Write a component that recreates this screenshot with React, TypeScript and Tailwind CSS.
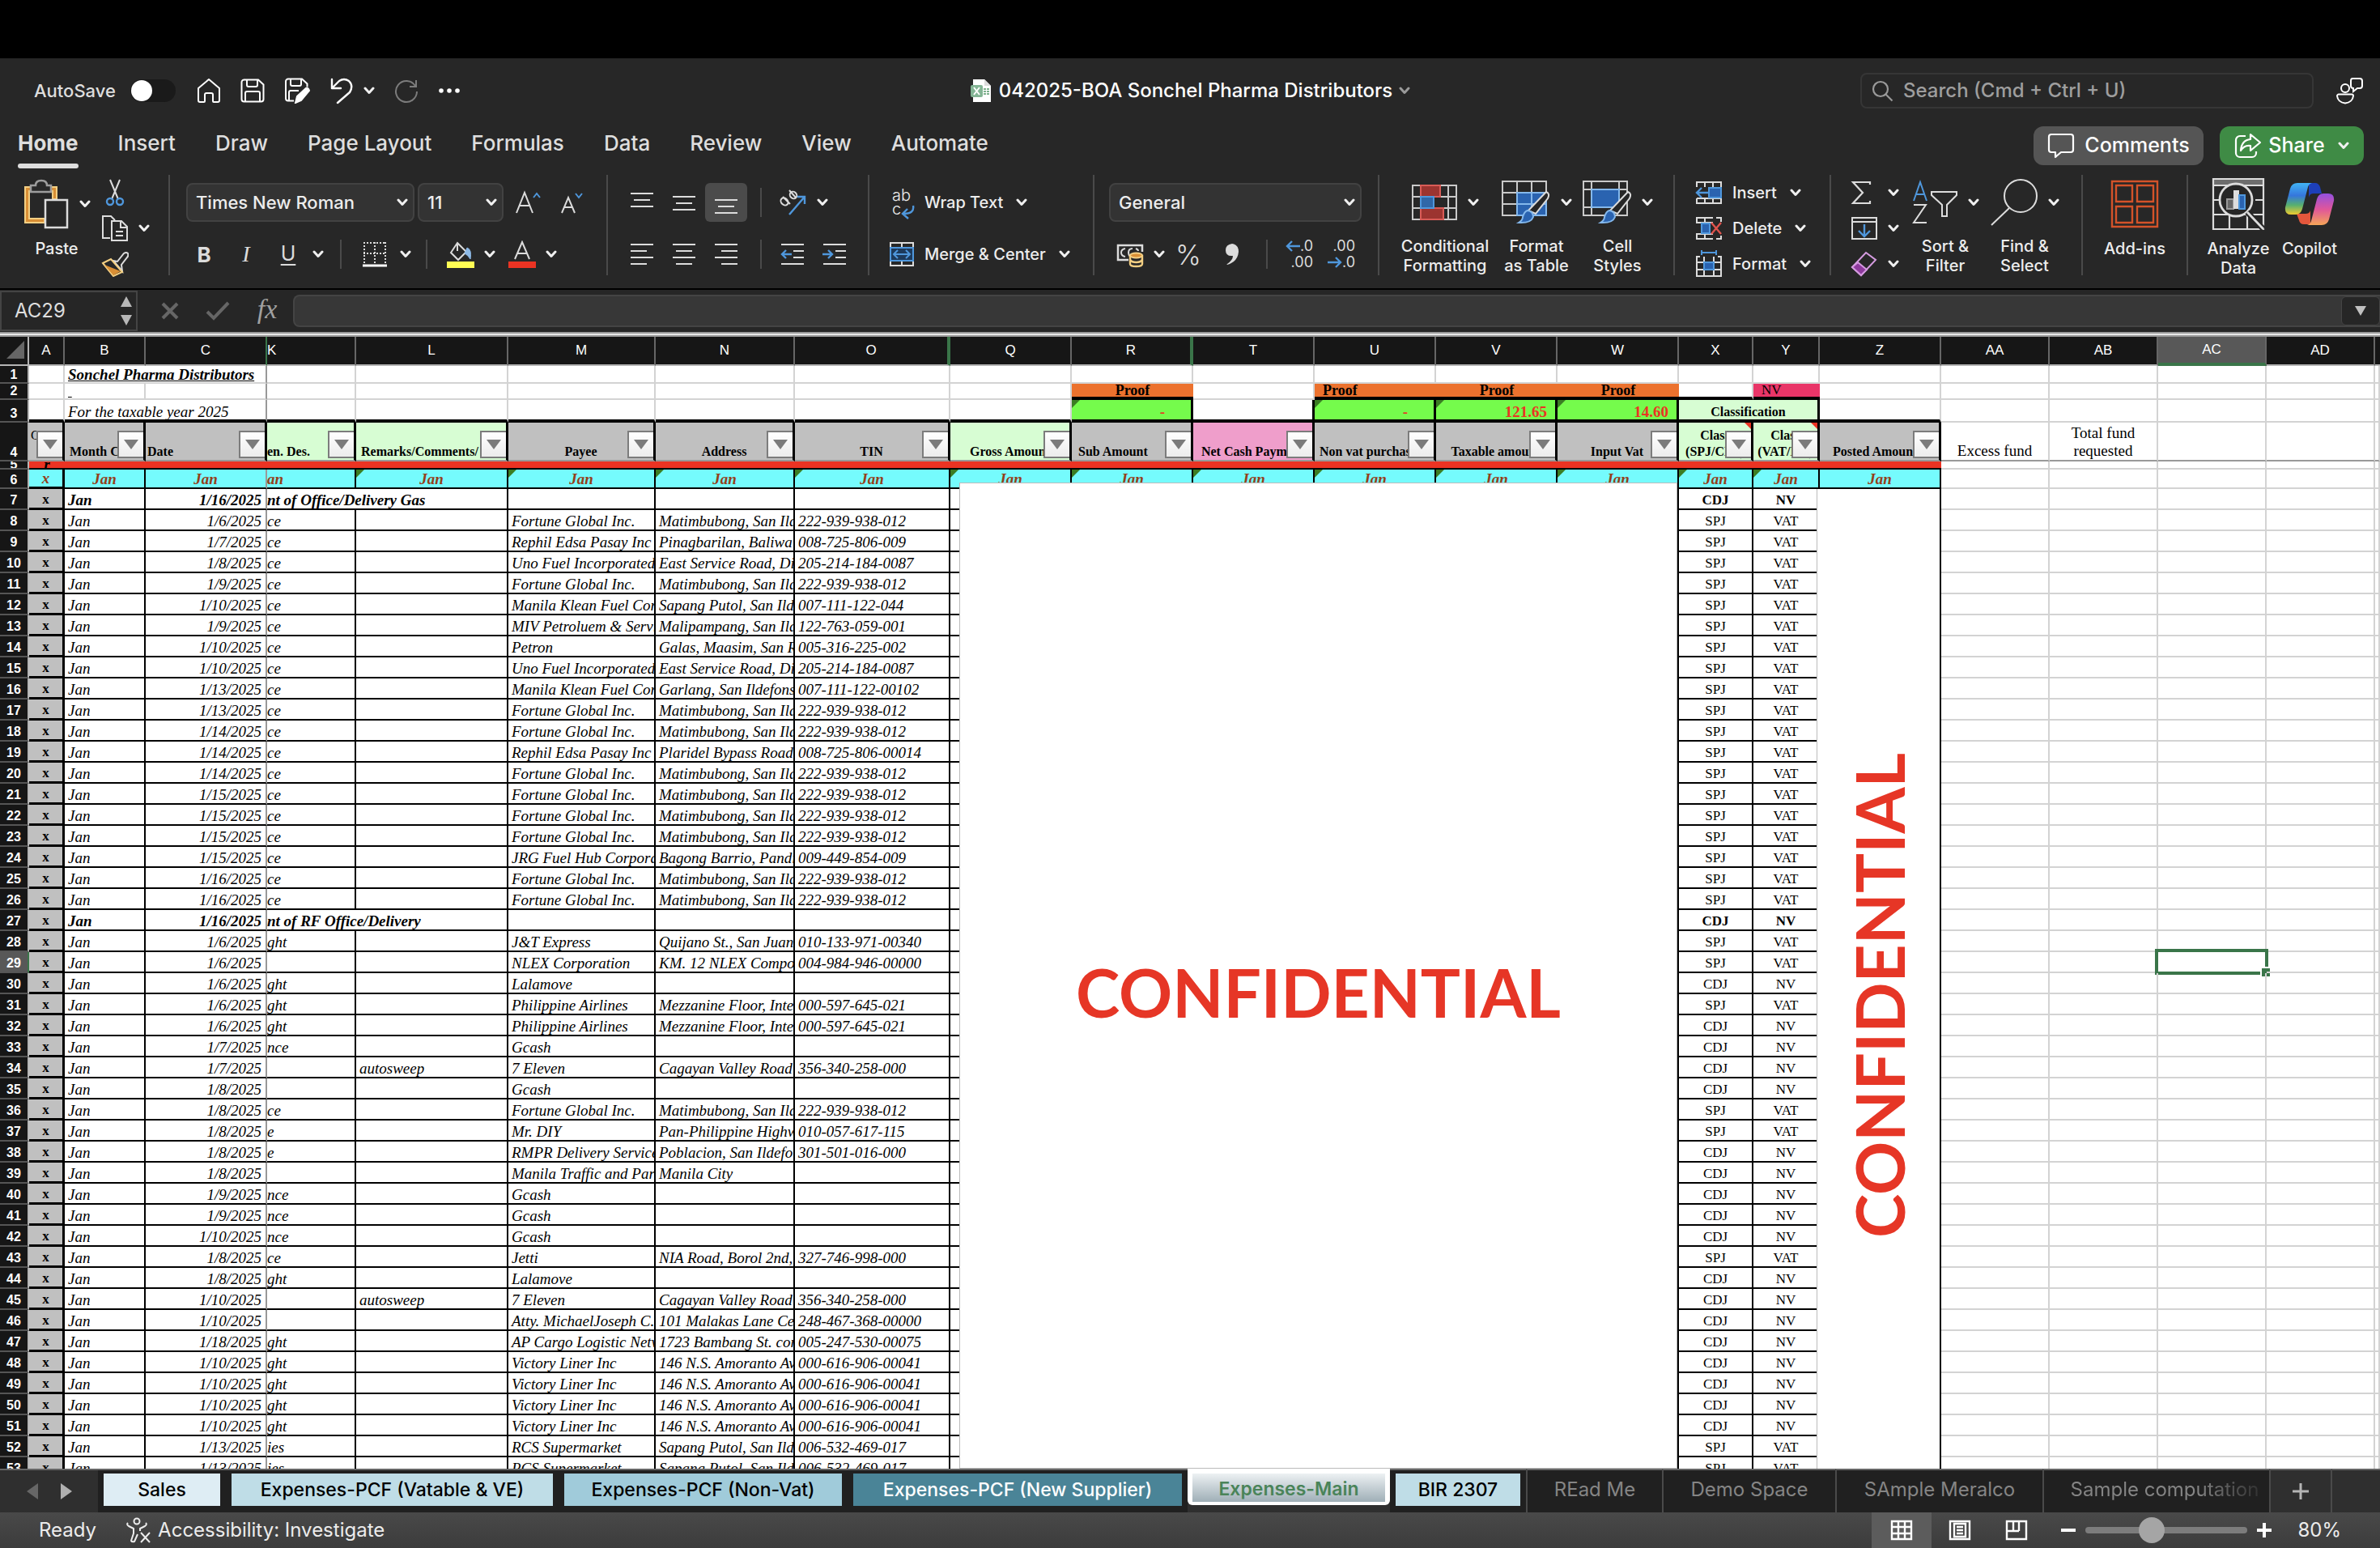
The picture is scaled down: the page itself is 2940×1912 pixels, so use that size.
import React from "react";
import { clsx, type ClassValue } from "clsx";
import { twMerge } from "tailwind-merge";

const cn = (...inputs: ClassValue[]) => twMerge(clsx(inputs));

const LIGHT = "#dcdcdc";
const BLUE = "#4f97dc";
const FILL_BLUE = "#2a63b0";

/* ---------------------------------- icons --------------------------------- */

type SvgProps = {
  w: number;
  h: number;
  stroke?: string;
  sw?: number;
  className?: string;
  children: React.ReactNode;
};

const Svg = ({ w, h, stroke = LIGHT, sw = 2, className, children }: SvgProps) => (
  <svg
    width={w}
    height={h}
    viewBox={`0 0 ${w} ${h}`}
    fill="none"
    stroke={stroke}
    strokeWidth={sw}
    className={cn("shrink-0", className)}
    aria-hidden="true"
  >
    {children}
  </svg>
);

const Chevron = ({ color = "#f0f0f0", className }: { color?: string; className?: string }) => (
  <Svg w={14} h={10} stroke={color} sw={3} className={className}>
    <path d="M2 2l5 5.5L12 2" strokeLinecap="round" strokeLinejoin="round" />
  </Svg>
);

const HomeIcon = () => (
  <Svg w={30} h={32} stroke="#fff">
    <path
      d="M2 13L15 2l13 11v15a2 2 0 0 1-2 2h-5a1 1 0 0 1-1-1v-8a2 2 0 0 0-2-2h-6a2 2 0 0 0-2 2v8a1 1 0 0 1-1 1H4a2 2 0 0 1-2-2z"
      strokeLinejoin="round"
    />
  </Svg>
);

const SaveIcon = () => (
  <Svg w={30} h={30} stroke="#fff">
    <path d="M4 1.5h18l6.500 6v18a3 3 0 0 1-3 3h-21a3 3 0 0 1-3-3v-21a3 3 0 0 1 3-3z" />
    <path d="M8 2v6a2 2 0 0 0 2 2h9a2 2 0 0 0 2-2V2M6 28V18a2 2 0 0 1 2-2h14a2 2 0 0 1 2 2v10" />
  </Svg>
);

const SaveEditIcon = () => (
  <Svg w={32} h={32} stroke="#fff">
    <path d="M12 28.500H5a3 3 0 0 1-3-3v-21a3 3 0 0 1 3-3h17l6.500 6v4" />
    <path d="M8 2v6a2 2 0 0 0 2 2h9a2 2 0 0 0 2-2V2M6 28V18a2 2 0 0 1 2-2h10" />
    <path d="M14 31l2-8 11-10q3-1 4 3L21 28z" fill="#fff" />
  </Svg>
);

const UndoIcon = () => (
  <Svg w={30} h={34} stroke="#fff" sw={2.4}>
    <path d="M3 3v11h11M3 14L12 5q6-4 12 0 6 6 1 14L10 32" strokeLinejoin="round" strokeLinecap="round" />
  </Svg>
);

const RedoIcon = () => (
  <Svg w={30} h={32} stroke="#7c7c7c">
    <path d="M27 3v8h-8M26 10A13 13 0 1 0 28 17" />
  </Svg>
);

const MoreIcon = () => (
  <Svg w={28} h={8} stroke="none">
    <circle cx="4" cy="4" r="2.800" fill="#fff" />
    <circle cx="14" cy="4" r="2.800" fill="#fff" />
    <circle cx="24" cy="4" r="2.800" fill="#fff" />
  </Svg>
);

const FileIcon = () => (
  <Svg w={28} h={30} stroke="none">
    <path d="M4 1h14l8 8v20H4z" fill="#fff" />
    <path d="M18 1l8 8h-8z" fill="#ddd" />
    <path d="M17 12h3v2h-3zM21 12h3v2h-3zM17 15h3v2h-3zM21 15h3v2h-3zM17 18h3v2h-3zM21 18h3v2h-3z" fill="#7db08c" />
    <rect x="1" y="8" width="15" height="15" rx="2" fill="#84b595" />
    <path d="M5 11l7 9M12 11l-7 9" stroke="#fff" strokeWidth="2" />
  </Svg>
);

const SearchIcon = () => (
  <Svg w={27} h={27} stroke="#9a9a9a" sw={2.2}>
    <circle cx="11" cy="11" r="9" />
    <path d="M17.500 17.500l8 8" />
  </Svg>
);

const PeopleIcon = () => (
  <Svg w={34} h={34} stroke="#fff">
    <circle cx="11" cy="14" r="5" />
    <path d="M3 21.500h16a2 2 0 0 1 2 2q-1 8-10 9-9-1-10-9a2 2 0 0 1 2-2z" />
    <path d="M20 2h9a3 3 0 0 1 3 3v6a3 3 0 0 1-3 3h-3l-5 4v-4q-3 0-3-3V5q0-3 2-3z" />
  </Svg>
);

const CommentIcon = () => (
  <Svg w={34} h={32} stroke="#fff" sw={2.2}>
    <path d="M5 2h24a3 3 0 0 1 3 3v16a3 3 0 0 1-3 3H17l-7 6v-6H5a3 3 0 0 1-3-3V5a3 3 0 0 1 3-3z" strokeLinejoin="round" />
  </Svg>
);

const ShareIcon = () => (
  <Svg w={34} h={32} stroke="#fff" sw={2.2}>
    <path d="M14 4H7a5 5 0 0 0-5 5v16a5 5 0 0 0 5 5h15a5 5 0 0 0 5-5v-2" />
    <path d="M20 2l12 10-12 10v-6q-8-1-12 6 1-13 12-14z" strokeLinejoin="round" />
  </Svg>
);

const PasteIcon = () => (
  <Svg w={58} h={62}>
    <path d="M10 10H3v44h24v-5H8V15h2zM35 10h7v15h-5V15h-2z" fill="#d98f35" stroke="#f3cf83" strokeWidth="2" />
    <path d="M10 16v-8h6q0-6 7-6t7 6h5v8z" fill="#292929" stroke="#9d9d9d" strokeWidth="2.500" />
    <rect x="28" y="26" width="27" height="34" fill="#262626" strokeWidth="2.500" />
  </Svg>
);

const ScissorsIcon = () => (
  <Svg w={24} h={34}>
    <path d="M6 1l10 24M18 1L8 25" />
    <circle cx="6" cy="28" r="4" stroke={BLUE} strokeWidth="2.400" />
    <circle cx="18" cy="28" r="4" stroke={BLUE} strokeWidth="2.400" />
  </Svg>
);

const CopyIcon = () => (
  <Svg w={34} h={34}>
    <path d="M11 29H2V2h10l5 5M13 8h12l7 7v17H13z" />
    <path d="M24 8v8h8M18 21h9M18 26h9" />
  </Svg>
);

const BrushIcon = () => (
  <Svg w={34} h={32}>
    <path d="M20 13l8-10q3-2 5 0 1 3-1 5l-7 9 1 8-11-13z" />
    <path d="M2 15l10-5 14 16-11 5z" stroke="#f3cf83" />
    <path d="M4 17l20 8-9 5z" fill="#d98f35" stroke="none" />
  </Svg>
);

const AlignIcon = ({ lines }: { lines: [number, number, number][] }) => (
  <Svg w={28} h={28}>
    {lines.map(([x, y, w]) => (
      <path key={y} d={`M${x} ${y}h${w}`} />
    ))}
  </Svg>
);

const IndentIcon = ({ out }: { out?: boolean }) => (
  <Svg w={30} h={28}>
    <path d="M1 2h28M16 10h13M16 18h13M1 26h28" />
    <path d={out ? "M14 14H2M7 9l-5 5 5 5" : "M0 14h12M7 9l5 5-5 5"} stroke={BLUE} strokeWidth="2.400" />
  </Svg>
);

const OrientationIcon = () => (
  <Svg w={34} h={32}>
    <ellipse cx="6" cy="15" rx="4" ry="5" transform="rotate(-45 6 15)" />
    <path d="M4 9l9 9M12 1l8 9" />
    <ellipse cx="17" cy="7" rx="4" ry="4.500" transform="rotate(-45 17 7)" />
    <path d="M12 31L31 9M22 9h9v9" stroke={BLUE} strokeWidth="2.400" />
  </Svg>
);

const BordersIcon = () => (
  <Svg w={30} h={32}>
    <path d="M1 2h28M1 15h28M2 1v26M15 1v26M28 1v26" strokeDasharray="2 2" />
    <path d="M0 30h30" stroke="#fff" strokeWidth="3" />
  </Svg>
);

const FillColorIcon = () => (
  <Svg w={34} h={34}>
    <path d="M13 3l11 11-10 10L5 15z M13 3v10" />
    <path d="M25 9q6 2 4 14-3-5-7-7z" fill="#8db9e6" stroke="#8db9e6" strokeWidth="1" />
    <path d="M0 26h34v8H0z" fill="#fffd54" stroke="none" />
  </Svg>
);

const FontColorIcon = () => (
  <Svg w={34} h={34}>
    <path d="M8 23L17 2l9 21M11 16h12" />
    <path d="M0 26h34v8H0z" fill="#eb3323" stroke="none" />
  </Svg>
);

const MergeIcon = () => (
  <Svg w={32} h={32}>
    <path d="M2 8V2h28v6M16 2v6M2 24v6h28v-6M16 30v-6" />
    <rect x="2" y="8" width="28" height="16" stroke={BLUE} fill="#1d3a5c" />
    <path d="M6 16h20M11 11l-5 5 5 5M21 11l5 5-5 5" stroke={BLUE} />
  </Svg>
);

const CurrencyIcon = () => (
  <Svg w={34} h={34}>
    <path d="M15 24H2V6h30v8" strokeWidth="2.500" />
    <path d="M11 10q-5 1-5 5t5 5M20 10q-5 0-5 5 0 3 2 5M24 10q3 1 3 3" />
    <path d="M17 19v10q0 3 7.500 3t7.500-3V19z" fill="#262626" stroke="#f3cf83" strokeWidth="2.400" />
    <path d="M17 24q2 3 7.500 3t7.500-3" stroke="#f3cf83" strokeWidth="2.400" />
    <ellipse cx="24.500" cy="18.500" rx="7.500" ry="3" fill="#d98f35" stroke="#f3cf83" strokeWidth="2" />
  </Svg>
);

const CommaIcon = () => (
  <Svg w={18} h={28} stroke="none">
    <path d="M9 1q8 1 8 10-1 12-14 16-1 0 0-1 7-5 7-10-9 1-9-7 0-7 8-8z" fill={LIGHT} />
  </Svg>
);

const ConditionalIcon = () => (
  <Svg w={58} h={46} stroke="#c9c9c9">
    <path d="M2 2h54v42H2zM2 16h54M2 30h54M12 2v42M46 2v42" />
    <path d="M12 2h24v14H12zM12 30h28v14H12z" fill="#9c3430" stroke="#d95c57" />
    <path d="M12 16h16v14H12z" fill="#2f67a8" stroke={BLUE} />
  </Svg>
);

const PaintBrush = () => (
  <>
    <path d="M58 15q5 2 2 8L45 42l-9-4z" fill="#262626" stroke={LIGHT} />
    <path d="M35 38q7 1 7 8-3 8-18 7 5-3 5-7 2-7 6-8z" fill={FILL_BLUE} stroke="#84b8ec" />
  </>
);

const FormatTableIcon = () => (
  <Svg w={62} h={56}>
    <path d="M2 2h54v42H2zM2 16h54M2 30h54M20 2v42M38 2v42" stroke="#c9c9c9" />
    <path d="M20 16h36v28H20z" fill={FILL_BLUE} stroke="#84b8ec" />
    <path d="M20 30h36M38 16v28" stroke="#84b8ec" />
    <g transform="translate(-2 0)">
      <PaintBrush />
    </g>
  </Svg>
);

const CellStylesIcon = () => (
  <Svg w={62} h={56}>
    <path d="M2 2h54v42H2zM2 12h54M2 34h10M12 2v42M46 2v10" stroke="#c9c9c9" />
    <path d="M12 12h34v22H12z" fill={FILL_BLUE} stroke="#84b8ec" />
    <g transform="translate(-1 0)">
      <PaintBrush />
    </g>
  </Svg>
);

const InsertCellsIcon = () => (
  <Svg w={34} h={30}>
    <path d="M2 8V2h30v26H2v-6M12 2v6M22 2v6M12 22v6M22 22v6M2 22h30" />
    <path d="M17 9h15v12H17z" fill={FILL_BLUE} stroke={BLUE} />
    <path d="M17 15H2M8 9l-6 6 6 6" stroke={BLUE} strokeWidth="2.400" />
  </Svg>
);

const DeleteCellsIcon = () => (
  <Svg w={34} h={30}>
    <path d="M22 2H2v6h20M12 2v6M22 28H2v-6h20M12 22v6M26 2h6v5M26 28h6v-4" />
    <path d="M8 9h10v12H8z" fill={FILL_BLUE} stroke={BLUE} />
    <path d="M20 8l12 14M32 8L20 22" stroke="#e0534d" strokeWidth="2.400" />
  </Svg>
);

const FormatCellsIcon = () => (
  <Svg w={34} h={34}>
    <path d="M8 3h18M8 0v6M26 0v6" stroke={BLUE} />
    <path d="M6 8H2v24h30V8h-4M2 15h30M2 24h30M11 8v24M23 8v24" />
    <path d="M11 15h12v9H11z" fill={FILL_BLUE} stroke={BLUE} />
  </Svg>
);

const SigmaIcon = () => (
  <Svg w={26} h={30}>
    <path d="M24 5V2H3l12 13L3 28h21v-3" strokeWidth="2.200" />
  </Svg>
);

const FillDownIcon = () => (
  <Svg w={34} h={30}>
    <path d="M2 2h30v26H2zM2 7h30" />
    <path d="M17 10v14M10 18l7 7 7-7" stroke={BLUE} strokeWidth="2.400" />
  </Svg>
);

const EraserIcon = () => (
  <Svg w={34} h={32} stroke="#d59be0">
    <path d="M19 2l12 9-18 19L2 20z" />
    <path d="M9 14l11 9-7 7L2 20z" fill="#8f3a9e" />
  </Svg>
);

const SortFilterIcon = () => (
  <Svg w={58} h={56}>
    <path d="M3 26L11 3l8 23M6 18h10" stroke={BLUE} />
    <path d="M3 31h15L3 53h16" />
    <path d="M25 15h31v4L44 31v14h-6V31L25 19z" />
  </Svg>
);

const FindIcon = () => (
  <Svg w={60} h={60}>
    <circle cx="38" cy="22" r="20" />
    <path d="M24 37L2 58" />
  </Svg>
);

const AddInsIcon = () => (
  <Svg w={60} h={60} stroke="#d4532a" sw={2.4}>
    <path d="M2 2h56v56H2zM7 7h20v20H7zM33 7h20v20H33zM7 33h20v20H7zM33 33h20v20H33z" />
  </Svg>
);

const AnalyzeIcon = () => (
  <Svg w={66} h={66}>
    <path d="M2 2h62v8H2z" fill="#6d6d6d" stroke="none" />
    <path d="M2 2h62v62H2zM2 10h62M2 28h10M54 28h10M2 46h62M22 46v18M44 46v18" strokeWidth="2.200" />
    <circle cx="30" cy="28" r="20" fill="#262626" strokeWidth="2.800" />
    <path d="M44 43l20 21" stroke="#262626" strokeWidth="7" />
    <path d="M44 43l20 21" strokeWidth="2.800" />
    <path d="M19 27h8v12h-8z" fill="#666" stroke="#999" />
    <path d="M27 16h7v23h-7z" fill="#ddd" stroke="none" />
    <path d="M34 22h7v17h-7z" fill={FILL_BLUE} stroke={BLUE} />
  </Svg>
);

const CopilotIcon = () => (
  <Svg w={62} h={54} stroke="none">
    <defs>
      <linearGradient id="cp-a" x1="0" y1="0" x2="0" y2="1">
        <stop offset="0" stopColor="#41b4f5" />
        <stop offset="0.4" stopColor="#3576dc" />
        <stop offset="0.7" stopColor="#57b070" />
        <stop offset="1" stopColor="#f0cb30" />
      </linearGradient>
      <linearGradient id="cp-b" x1="0" y1="0" x2="0" y2="1">
        <stop offset="0" stopColor="#9350e0" />
        <stop offset="0.5" stopColor="#e0569a" />
        <stop offset="1" stopColor="#f5a557" />
      </linearGradient>
    </defs>
    <path d="M30 1h8q4 0 6 5l2 8H36q-5 0-6 5z" fill="#1d3fb8" />
    <path d="M32 52h-8q-5 0-6-5l-3-8h11q5 0 6-4z" fill="#e4573c" />
    <path d="M16 1h18q-4 1-5 5l-7 27q-2 7-8 7H8q-8 0-7-9L7 8q2-7 9-7z" fill="url(#cp-a)" />
    <path d="M46 53H28q4-1 5-5l7-27q2-7 8-7h6q8 0 7 9l-6 23q-2 7-9 7z" fill="url(#cp-b)" />
  </Svg>
);

/* --------------------------------- toolbar -------------------------------- */

const TABS = ["Home", "Insert", "Draw", "Page Layout", "Formulas", "Data", "Review", "View", "Automate"];

const TitleBar = () => (
  <div className="grid grid-cols-[1fr_auto_1fr] items-center h-20 px-5">
    <div className="flex items-center pl-[22px]">
      <label className="flex items-center gap-[18px] text-[22px] font-medium text-[#dedede]">
        AutoSave
        <span className="relative flex w-14 h-7 rounded-full bg-[#1a1a1a]">
          <input type="checkbox" className="peer absolute inset-0 opacity-0" />
          <span className="w-[26px] h-[26px] m-px rounded-full bg-white peer-checked:translate-x-7" />
        </span>
      </label>
      <div className="flex items-center ml-[26px] gap-6">
        <button aria-label="Home"><HomeIcon /></button>
        <button aria-label="Save"><SaveIcon /></button>
        <button aria-label="Save as"><SaveEditIcon /></button>
        <button aria-label="Undo" className="flex items-center gap-3"><UndoIcon /><Chevron /></button>
        <button aria-label="Redo"><RedoIcon /></button>
        <button aria-label="More"><MoreIcon /></button>
      </div>
    </div>

    <button className="flex items-center gap-2 text-[24px] font-medium text-white">
      <FileIcon />
      042025-BOA Sonchel Pharma Distributors
      <Chevron color="#9a9a9a" />
    </button>

    <div className="flex items-center justify-end gap-7">
      <label className="flex items-center gap-3 w-[560px] h-11 px-3 rounded-lg border-2 border-[#363636]">
        <SearchIcon />
        <input
          aria-label="Search"
          placeholder="Search (Cmd + Ctrl + U)"
          className="flex-1 bg-transparent outline-none text-[24px] font-medium text-white placeholder:text-[#9e9e9e]"
        />
      </label>
      <button aria-label="Share status"><PeopleIcon /></button>
    </div>
  </div>
);

const TabRow = () => (
  <div className="flex items-start justify-between h-[52px] pl-[22px] pr-5">
    <div className="flex gap-[49px]">
      {TABS.map((tab, i) => (
        <button
          key={tab}
          className={cn(
            "flex flex-col gap-1 pt-1 text-[26px] leading-[42px] font-medium text-[#dedede]",
            i === 0 && "font-bold"
          )}
        >
          {tab}
          {i === 0 && <span className="w-full h-[6px] rounded-full bg-[#dedede]" />}
        </button>
      ))}
    </div>
    <div className="flex gap-5 pt-1 text-[25px] font-medium text-white">
      <button className="flex items-center justify-center gap-3 w-[210px] h-12 rounded-xl bg-[#555]">
        <CommentIcon />
        Comments
      </button>
      <button className="flex items-center justify-center gap-2 w-[178px] h-12 rounded-xl bg-[#3f8b45]">
        <ShareIcon />
        Share
        <Chevron className="ml-2" />
      </button>
    </div>
  </div>
);

const Group = ({ className, children }: { className?: string; children: React.ReactNode }) => (
  <div className={cn("shrink-0 h-[124px] border-r-2 border-[#4a4a4a]", className)}>{children}</div>
);

const Rule = ({ className }: { className?: string }) => (
  <span className={cn("shrink-0 w-[2px] h-9 bg-[#4a4a4a]", className)} />
);

const ToolButton = ({
  label,
  className,
  children
}: {
  label: string;
  className?: string;
  children: React.ReactNode;
}) => (
  <button
    aria-label={label}
    className={cn("shrink-0 flex items-center justify-center w-13 h-10 text-[#dcdcdc]", className)}
  >
    {children}
  </button>
);

const BigButton = ({
  lines,
  icon,
  arrow,
  className
}: {
  lines: string[];
  icon: React.ReactNode;
  arrow?: boolean;
  className?: string;
}) => (
  <button className={cn("shrink-0 flex flex-col items-center text-[20px] leading-6 font-medium text-[#ededed]", className)}>
    <span className="flex items-center justify-center gap-3 h-[79px] pb-2">
      {icon}
      {arrow && <Chevron />}
    </span>
    {lines.map((line) => (
      <span key={line} className="whitespace-nowrap">{line}</span>
    ))}
  </button>
);

const Picker = ({ label, value, className }: { label: string; value: string; className?: string }) => (
  <span className={cn("relative flex items-center", className)}>
    <select
      aria-label={label}
      className="appearance-none w-full h-12 pl-[10px] rounded-lg bg-[#333] border-2 border-[#424242] text-[22px] font-medium text-[#ededed]"
    >
      <option>{value}</option>
    </select>
    <Chevron className="absolute right-2" />
  </span>
);

const RowButton = ({ icon, label, className }: { icon: React.ReactNode; label: string; className?: string }) => (
  <button className={cn("flex items-center gap-3 text-[20px] font-medium text-[#ededed] whitespace-nowrap", className)}>
    {icon}
    {label}
    <Chevron className="ml-1" />
  </button>
);

const Ribbon = () => (
  <div className="flex h-[152px] pt-3">
    <Group className="flex w-[210px] pl-7">
      <BigButton lines={["Paste"]} icon={<PasteIcon />} arrow className="w-[84px]" />
      <div className="flex flex-col ml-3">
        <ToolButton label="Cut" className="h-11 w-9"><ScissorsIcon /></ToolButton>
        <ToolButton label="Copy" className="h-11 w-16 gap-3 justify-start pl-px"><CopyIcon /><Chevron /></ToolButton>
        <ToolButton label="Format painter" className="h-11 w-9"><BrushIcon /></ToolButton>
      </div>
    </Group>

    <Group className="flex flex-col gap-5 w-[541px] pl-4 pt-[10px]">
      <div className="flex items-center pl-1">
        <Picker label="Font" value="Times New Roman" className="w-[282px]" />
        <Picker label="Font size" value="11" className="w-[106px] ml-1" />
        <ToolButton label="Increase font size" className="w-[60px] h-12">
          <Svg w={32} h={30}><path d="M2 28L12 3l10 25M6 19h12" /><path d="M23 9l4-5 4 5" stroke={BLUE} /></Svg>
        </ToolButton>
        <ToolButton label="Decrease font size" className="w-12 h-12">
          <Svg w={28} h={30}><path d="M2 28L10 9l8 19M5 21h10" /><path d="M19 4l4 5 4-5" stroke={BLUE} /></Svg>
        </ToolButton>
      </div>
      <div className="flex items-center">
        <ToolButton label="Bold" className="text-[26px] font-bold">B</ToolButton>
        <ToolButton label="Italic" className="text-[28px] italic font-['Liberation_Serif',serif]">I</ToolButton>
        <ToolButton label="Underline" className="text-[25px] underline underline-offset-4">U</ToolButton>
        <Chevron className="ml-1" />
        <Rule className="ml-5 mr-3" />
        <ToolButton label="Borders" className="gap-4 w-[88px]"><BordersIcon /><Chevron /></ToolButton>
        <Rule className="ml-1 mr-3" />
        <ToolButton label="Fill colour" className="gap-3 w-[76px] ml-1"><FillColorIcon /><Chevron /></ToolButton>
        <ToolButton label="Font colour" className="gap-3 w-[76px]"><FontColorIcon /><Chevron /></ToolButton>
      </div>
    </Group>

    <Group className="flex flex-col gap-5 w-[323px] pl-4 pt-[10px]">
      <div className="flex items-center">
        <ToolButton label="Top align"><AlignIcon lines={[[0, 3, 28], [4, 11, 20], [0, 19, 28]]} /></ToolButton>
        <ToolButton label="Middle align"><AlignIcon lines={[[0, 7, 28], [4, 15, 20], [0, 23, 28]]} /></ToolButton>
        <ToolButton label="Bottom align" className="h-12 rounded-md bg-[#4b4b4b]">
          <AlignIcon lines={[[0, 11, 28], [4, 19, 20], [0, 27, 28]]} />
        </ToolButton>
        <Rule className="ml-4 mr-5" />
        <ToolButton label="Orientation" className="gap-3 w-16"><OrientationIcon /><Chevron /></ToolButton>
      </div>
      <div className="flex items-center">
        <ToolButton label="Align left"><AlignIcon lines={[[0, 2, 28], [0, 10, 20], [0, 18, 28], [0, 26, 20]]} /></ToolButton>
        <ToolButton label="Center"><AlignIcon lines={[[0, 2, 28], [4, 10, 20], [0, 18, 28], [4, 26, 20]]} /></ToolButton>
        <ToolButton label="Align right"><AlignIcon lines={[[0, 2, 28], [8, 10, 20], [0, 18, 28], [8, 26, 20]]} /></ToolButton>
        <Rule className="ml-4 mr-3" />
        <ToolButton label="Decrease indent"><IndentIcon out /></ToolButton>
        <ToolButton label="Increase indent"><IndentIcon /></ToolButton>
      </div>
    </Group>

    <Group className="flex flex-col gap-5 w-[278px] pl-6 pt-[10px]">
      <RowButton
        label="Wrap Text"
        className="h-12"
        icon={
          <span className="relative flex flex-col w-8 text-[20px] leading-[17px] font-light text-left pl-1">
            <span>ab</span>
            <span>c</span>
            <Svg w={18} h={18} stroke={BLUE} className="absolute right-0 -bottom-1">
              <path d="M16 1q2 10-12 10M9 5l-6 6 7 6" strokeWidth="2.400" />
            </Svg>
          </span>
        }
      />
      <RowButton label="Merge & Center" className="h-10" icon={<MergeIcon />} />
    </Group>

    <Group className="flex flex-col gap-5 w-[352px] pl-[18px] pt-[10px]">
      <Picker label="Number format" value="General" className="w-[312px]" />
      <div className="flex items-center">
        <ToolButton label="Currency" className="gap-3 w-[78px]"><CurrencyIcon /><Chevron /></ToolButton>
        <ToolButton label="Percent" className="w-10 text-[34px] font-light">%</ToolButton>
        <ToolButton label="Comma style" className="w-17"><CommaIcon /></ToolButton>
        <Rule className="ml-2 mr-3" />
        <ToolButton label="Increase decimal" className="flex-col text-[18px] leading-5 items-end pr-2">
          <span className="flex items-center">
            <Svg w={18} h={14} stroke={BLUE}><path d="M18 7H2M8 1L2 7l6 6" strokeWidth="2.400" /></Svg>.0
          </span>
          <span>.00</span>
        </ToolButton>
        <ToolButton label="Decrease decimal" className="flex-col text-[18px] leading-5 items-end pr-2">
          <span>.00</span>
          <span className="flex items-center">
            <Svg w={18} h={14} stroke={BLUE}><path d="M0 7h16M10 1l6 6-6 6" strokeWidth="2.400" /></Svg>.0
          </span>
        </ToolButton>
      </div>
    </Group>

    <Group className="flex w-[365px] pl-6">
      <BigButton lines={["Conditional", "Formatting"]} icon={<ConditionalIcon />} arrow className="w-[114px]" />
      <BigButton lines={["Format", "as Table"]} icon={<FormatTableIcon />} arrow className="w-[112px]" />
      <BigButton lines={["Cell", "Styles"]} icon={<CellStylesIcon />} arrow className="w-[88px]" />
    </Group>

    <Group className="flex flex-col w-[193px] pl-[25px]">
      <RowButton label="Insert" className="h-11 shrink-0" icon={<InsertCellsIcon />} />
      <RowButton label="Delete" className="h-11 shrink-0" icon={<DeleteCellsIcon />} />
      <RowButton label="Format" className="h-11 shrink-0" icon={<FormatCellsIcon />} />
    </Group>

    <Group className="flex w-[311px] pl-6">
      <div className="flex flex-col">
        <ToolButton label="AutoSum" className="h-11 w-15 justify-between"><SigmaIcon /><Chevron /></ToolButton>
        <ToolButton label="Fill" className="h-11 w-15 justify-between"><FillDownIcon /><Chevron /></ToolButton>
        <ToolButton label="Clear" className="h-11 w-15 justify-between"><EraserIcon /><Chevron /></ToolButton>
      </div>
      <BigButton lines={["Sort &", "Filter"]} icon={<SortFilterIcon />} arrow className="w-[98px] ml-2" />
      <BigButton lines={["Find &", "Select"]} icon={<FindIcon />} arrow className="w-[98px]" />
    </Group>

    <Group className="flex justify-center w-[130px]">
      <BigButton lines={["Add-ins"]} icon={<AddInsIcon />} />
    </Group>

    <div className="flex pl-[18px]">
      <BigButton lines={["Analyze", "Data"]} icon={<AnalyzeIcon />} className="w-[88px]" />
      <BigButton lines={["Copilot"]} icon={<CopilotIcon />} className="w-[88px]" />
    </div>
  </div>
);

const FormulaBar = () => (
  <div className="flex items-center h-[54px] border-t-2 border-black bg-[#262626]">
    <div className="flex items-center justify-between w-[170px] h-[50px] pl-4 pr-1 border-2 border-[#444]">
      <input aria-label="Name box" defaultValue="AC29" className="w-24 bg-transparent outline-none text-[24px] text-[#dedede]" />
      <Svg w={16} h={38} stroke="none">
        <path d="M8 1l7 13H1zM8 37l7-13H1z" fill="#b8b8b8" />
      </Svg>
    </div>
    <button aria-label="Cancel" className="ml-7">
      <Svg w={24} h={24} stroke="#666" sw={4}><path d="M3 3l18 18M21 3L3 21" /></Svg>
    </button>
    <button aria-label="Enter" className="ml-8">
      <Svg w={30} h={24} stroke="#666" sw={4}><path d="M2 13l8 8L28 2" /></Svg>
    </button>
    <span className="w-16 ml-[14px] pb-1 text-center text-[34px] leading-10 italic text-[#a0a0a0] font-['Liberation_Serif',serif]">fx</span>
    <div className="flex flex-1 h-10 rounded-l-lg border-2 border-r-0 border-[#444] bg-[#373737]">
      <input aria-label="Formula" className="flex-1 bg-transparent outline-none px-3 text-[24px] text-white" />
      <button aria-label="Expand formula bar" className="flex items-center justify-center w-12 rounded-md border border-[#444] bg-[#262626]">
        <Svg w={14} h={14} stroke="none"><path d="M0 1h14L7 13z" fill="#c0c0c0" /></Svg>
      </button>
    </div>
  </div>
);

/* ---------------------------------- sheet --------------------------------- */

const COLUMNS: [string, string][] = [
  ["A", "w-[44px]"],
  ["B", "w-[100px]"],
  ["C", "w-[150px]"],
  ["K", "w-[110px]"],
  ["L", "w-[188px]"],
  ["M", "w-[182px]"],
  ["N", "w-[172px]"],
  ["O", "w-[192px]"],
  ["Q", "w-[150px]"],
  ["R", "w-[150px]"],
  ["T", "w-[150px]"],
  ["U", "w-[150px]"],
  ["V", "w-[150px]"],
  ["W", "w-[150px]"],
  ["X", "w-[92px]"],
  ["Y", "w-[82px]"],
  ["Z", "w-[150px]"],
  ["AA", "w-[134px]"],
  ["AB", "w-[134px]"],
  ["AC", "w-[134px]"],
  ["AD", "w-[134px]"]
];

type Entry = {
  date: string;
  k?: string;
  l?: string;
  payee?: string;
  address?: string;
  tin?: string;
  cls: string;
  vat: string;
  heading?: boolean;
};

const spj = (date: string, k: string, payee: string, address: string, tin: string): Entry => ({
  date, k, payee, address, tin, cls: "SPJ", vat: "VAT"
});

const cdj = (date: string, k: string, payee: string, address = "", tin = "", l = ""): Entry => ({
  date, k, l, payee, address, tin, cls: "CDJ", vat: "NV"
});

const fortune = (date: string) => spj(date, "ce", "Fortune Global Inc.", "Matimbubong, San Ild", "222-939-938-012");

const victory = () => cdj("1/10/2025", "ght", "Victory Liner Inc", "146 N.S. Amoranto Av", "000-616-906-00041");

const ENTRIES: Entry[] = [
  { date: "1/16/2025", k: "nt of Office/Delivery Gas", cls: "CDJ", vat: "NV", heading: true },
  fortune("1/6/2025"),
  spj("1/7/2025", "ce", "Rephil Edsa Pasay Inc", "Pinagbarilan, Baliwa", "008-725-806-009"),
  spj("1/8/2025", "ce", "Uno Fuel Incorporated", "East Service Road, Dis", "205-214-184-0087"),
  fortune("1/9/2025"),
  spj("1/10/2025", "ce", "Manila Klean Fuel Cor", "Sapang Putol, San Ild", "007-111-122-044"),
  spj("1/9/2025", "ce", "MIV Petroluem & Servi", "Malipampang, San Ild", "122-763-059-001"),
  spj("1/10/2025", "ce", "Petron", "Galas, Maasim, San R", "005-316-225-002"),
  spj("1/10/2025", "ce", "Uno Fuel Incorporated", "East Service Road, Dis", "205-214-184-0087"),
  spj("1/13/2025", "ce", "Manila Klean Fuel Cor", "Garlang, San Ildefons", "007-111-122-00102"),
  fortune("1/13/2025"),
  fortune("1/14/2025"),
  spj("1/14/2025", "ce", "Rephil Edsa Pasay Inc", "Plaridel Bypass Road", "008-725-806-00014"),
  fortune("1/14/2025"),
  fortune("1/15/2025"),
  fortune("1/15/2025"),
  fortune("1/15/2025"),
  spj("1/15/2025", "ce", "JRG Fuel Hub Corpora", "Bagong Barrio, Pandi", "009-449-854-009"),
  fortune("1/16/2025"),
  fortune("1/16/2025"),
  { date: "1/16/2025", k: "nt of RF Office/Delivery", cls: "CDJ", vat: "NV", heading: true },
  spj("1/6/2025", "ght", "J&T Express", "Quijano St., San Juan", "010-133-971-00340"),
  spj("1/6/2025", "", "NLEX Corporation", "KM. 12 NLEX Compou", "004-984-946-00000"),
  cdj("1/6/2025", "ght", "Lalamove"),
  spj("1/6/2025", "ght", "Philippine Airlines", "Mezzanine Floor, Inte", "000-597-645-021"),
  cdj("1/6/2025", "ght", "Philippine Airlines", "Mezzanine Floor, Inte", "000-597-645-021"),
  cdj("1/7/2025", "nce", "Gcash"),
  cdj("1/7/2025", "", "7 Eleven", "Cagayan Valley Road", "356-340-258-000", "autosweep"),
  cdj("1/8/2025", "", "Gcash"),
  fortune("1/8/2025"),
  spj("1/8/2025", "e", "Mr. DIY", "Pan-Philippine Highw", "010-057-617-115"),
  cdj("1/8/2025", "e", "RMPR Delivery Services", "Poblacion, San Ildefo", "301-501-016-000"),
  cdj("1/8/2025", "", "Manila Traffic and Par", "Manila City"),
  cdj("1/9/2025", "nce", "Gcash"),
  cdj("1/9/2025", "nce", "Gcash"),
  cdj("1/10/2025", "nce", "Gcash"),
  spj("1/8/2025", "ce", "Jetti", "NIA Road, Borol 2nd,", "327-746-998-000"),
  cdj("1/8/2025", "ght", "Lalamove"),
  cdj("1/10/2025", "", "7 Eleven", "Cagayan Valley Road", "356-340-258-000", "autosweep"),
  cdj("1/10/2025", "", "Atty. MichaelJoseph C.", "101 Malakas Lane Ce", "248-467-368-00000"),
  cdj("1/18/2025", "ght", "AP Cargo Logistic Netw", "1723 Bambang St. cor", "005-247-530-00075"),
  victory(),
  victory(),
  victory(),
  victory(),
  spj("1/13/2025", "ies", "RCS Supermarket", "Sapang Putol, San Ild", "006-532-469-017"),
  spj("1/13/2025", "ies", "RCS Supermarket", "Sapang Putol, San Ild", "006-532-469-017")
];

const Td = ({ className, colSpan, children }: { className?: string; colSpan?: number; children?: React.ReactNode }) => (
  <td
    colSpan={colSpan}
    className={cn(
      "relative p-0 align-bottom overflow-hidden whitespace-nowrap border-r-2 border-b-2 border-[#d3d3d3]",
      className
    )}
  >
    {children}
  </td>
);

const RowHead = ({ n, active, className }: { n: number; active?: boolean; className?: string }) => (
  <th
    scope="row"
    className={cn(
      "p-0 align-bottom overflow-hidden text-center font-bold text-[16px] leading-[18px] font-['Liberation_Sans',sans-serif] text-white bg-[#161616] border-r-2 border-b-2 border-r-[#b5b5b5] border-b-[#555]",
      active && "bg-[#585858] border-r-[#3a7549]",
      className
    )}
  >
    {n}
  </th>
);

const Blank = ({ count, className }: { count: number; className?: string }) => (
  <>
    {Array.from({ length: count }, (_, i) => (
      <Td key={i} className={className} />
    ))}
  </>
);

const ErrorMark = () => (
  <span className="absolute top-0 left-0 w-[10px] h-[10px] bg-[#3b7d23] [clip-path:polygon(0_0,100%_0,0_100%)]" />
);

const NoteMark = () => (
  <span className="absolute top-0 right-0 w-2 h-2 bg-[#eb3323] [clip-path:polygon(0_0,100%_0,100%_100%)]" />
);

const FilterButton = () => (
  <button
    aria-label="Filter"
    className="absolute right-0 bottom-[2px] flex items-center justify-center w-8 h-[34px] border-2 border-r-0 border-[#7c7c7c] bg-linear-to-b from-white to-[#ececec]"
  >
    <Svg w={18} h={12} stroke="none">
      <path d="M0 0h18L9 12z" fill="#7b7b7b" />
    </Svg>
  </button>
);

const HEADERS: { text: string; className: string; note?: boolean }[] = [
  { text: "C\n ", className: "pl-[2px] bg-[#c0c0c0] font-normal" },
  { text: "Month Co", className: "pl-[6px] bg-[#c0c0c0]" },
  { text: "Date", className: "pl-[2px] bg-[#c0c0c0]" },
  { text: "en. Des.", className: "bg-[#d7fdd3]" },
  { text: "Remarks/Comments/", className: "pl-[6px] bg-[#d7fdd3]" },
  { text: "Payee", className: "text-center bg-[#c0c0c0]" },
  { text: "Address", className: "text-center bg-[#c0c0c0]" },
  { text: "TIN", className: "text-center bg-[#c0c0c0]" },
  { text: "Gross Amount", className: "text-center bg-[#d7fdd3]" },
  { text: "Sub Amount", className: "pl-[8px] bg-[#c0c0c0]" },
  { text: "Net Cash Payment", className: "text-center bg-[#ef9ecb]" },
  { text: "Non vat purchases", className: "pl-[6px] bg-[#c0c0c0]" },
  { text: "Taxable amount", className: "text-center bg-[#c0c0c0]" },
  { text: "Input Vat", className: "text-center bg-[#c0c0c0]" },
  { text: "Class\n(SPJ/CDJ)", className: "text-center bg-[#d7fdd3]", note: true },
  { text: "Class\n(VAT/NV)", className: "text-center bg-[#d7fdd3]", note: true },
  { text: "Posted Amount", className: "pl-4 bg-[#c0c0c0]" }
];

const PROOF = "bg-[#ec722e] font-bold text-[18px] leading-4 border-b-4 border-b-black border-r-0 text-center";
const TOTAL = "bg-[#75fb4c] font-bold text-[#eb3323] text-right border-r-[3px] border-b-4 border-black pr-[10px]";

const Sheet = () => (
  <div className="relative flex-1 min-h-0 overflow-hidden bg-white">
    <table className="table-fixed w-full border-separate border-spacing-0 text-black text-[19px] leading-[18px] font-['Liberation_Serif',serif]">
      <colgroup>
        <col className="w-[36px]" />
        {COLUMNS.map(([name, width]) => (
          <col key={name} className={width} />
        ))}
        <col />
      </colgroup>
      <thead>
        <tr className="h-9 bg-[#161616] text-white text-[17px] font-['Liberation_Sans',sans-serif]">
          <th className="p-0 border-r-2 border-b-2 border-[#b5b5b5]">
            <Svg w={24} h={24} stroke="none" className="ml-2"><path d="M22 0v22H0z" fill="#666" /></Svg>
          </th>
          {COLUMNS.map(([name]) => (
            <th
              key={name}
              scope="col"
              className={cn(
                "p-0 font-medium text-center border-r-2 border-b-2 border-r-[#666] border-b-[#b5b5b5]",
                name === "C" && "border-r-[#3a7549]",
                name === "K" && "text-left",
                (name === "O" || name === "R") && "border-r-4 border-r-[#3a7549]",
                name === "AC" && "bg-[#585858] border-b-4 border-b-[#3a7549]"
              )}
            >
              {name}
            </th>
          ))}
          <th className="p-0 border-b-2 border-[#b5b5b5]" />
        </tr>
      </thead>
      <tbody>
        <tr className="h-[22px]">
          <RowHead n={1} />
          <Td />
          <Td colSpan={2} className="pl-1 font-bold italic underline border-r-[#999]">Sonchel Pharma Distributors</Td>
          <Blank count={19} />
        </tr>
        <tr className="h-5">
          <RowHead n={2} />
          <Td />
          <Td className="pl-1 font-bold underline">{"\u00a0"}</Td>
          <Td className="border-r-[#999]" />
          <Blank count={6} />
          <Td className={PROOF}>Proof</Td>
          <Td />
          <Td className={cn(PROOF, "text-left pl-[10px]")}>Proof</Td>
          <Td className={PROOF}>Proof</Td>
          <Td className={PROOF}>Proof</Td>
          <Td className="border-b-4 border-b-black" />
          <Td className="bg-[#e93568] pl-[10px] text-[17px] leading-4 border-b-4 border-b-black border-r-0">NV</Td>
          <Blank count={6} />
        </tr>
        <tr className="h-7">
          <RowHead n={3} />
          <Td className="border-b-4 border-b-black" />
          <Td colSpan={2} className="pl-1 italic border-r-[#999] border-b-4 border-b-black">For the taxable year 2025</Td>
          <Blank count={6} className="border-b-4 border-b-black" />
          <Td className={cn(TOTAL, "pr-[32px]")}><ErrorMark />-</Td>
          <Td className="border-b-4 border-b-black border-r-[3px] border-r-black" />
          <Td className={cn(TOTAL, "pr-[32px]")}><ErrorMark />-</Td>
          <Td className={TOTAL}><ErrorMark />121.65</Td>
          <Td className={TOTAL}><ErrorMark />14.60</Td>
          <Td colSpan={2} className="bg-[#d7fdd3] text-center text-[16px] leading-[18px] font-bold border-r-[3px] border-b-4 border-black">
            Classification
          </Td>
          <Td className="border-b-4 border-b-black" />
          <Blank count={5} />
        </tr>
        <tr className="h-12">
          <RowHead n={4} />
          {HEADERS.map(({ text, className, note }) => (
            <Td
              key={text}
              className={cn(
                "whitespace-pre text-[16px] leading-5 font-bold border-r-[3px] border-r-black border-b-[#999]",
                className
              )}
            >
              {text}
              {note && <NoteMark />}
              <FilterButton />
            </Td>
          ))}
          <Td className="text-center border-b-[#999] pb-[2px]">Excess fund</Td>
          <Td className="text-center border-b-[#999] whitespace-normal leading-[22px]">Total fund requested</Td>
          <Blank count={3} className="border-b-[#999]" />
        </tr>
        <tr className="h-[10px]">
          <RowHead n={5} className="leading-[8px]" />
          <Td className="bg-[#eb3323] border-r-0 border-b-black text-center italic font-bold leading-[8px]">r</Td>
          <Blank count={16} className="bg-[#eb3323] border-r-0 border-b-black" />
          <Blank count={5} />
        </tr>
        <tr className="h-6">
          <RowHead n={6} />
          {COLUMNS.slice(0, 17).map(([name]) => (
            <Td
              key={name}
              className={cn(
                "pb-px bg-[#75fbfd] text-center font-bold italic text-[#93401a] border-black",
                name === "A" && "border-b-[3px] border-r-[3px]",
                name === "C" && "border-r-[#999]",
                name === "K" && "text-left"
              )}
            >
              {name.length === 1 && name >= "L" && name < "Z" && <ErrorMark />}
              {name === "A" ? "x" : name === "K" ? "an" : "Jan"}
            </Td>
          ))}
          <Blank count={5} />
        </tr>
        {ENTRIES.map((entry, i) => {
          const n = i + 7;
          const cell = cn("pb-px pl-1 italic border-black", entry.heading && "font-bold");
          return (
            <tr key={n} className="h-[26px]">
              <RowHead n={n} active={n === 29} className="pb-px" />
              <Td className="pb-px bg-[#c0c0c0] text-center text-[17px] leading-[18px] font-bold border-black border-r-[3px] border-b-[3px]">x</Td>
              <Td className={cell}>Jan</Td>
              <Td className={cn(cell, "text-right pr-[5px] border-r-[#999]")}>{entry.date}</Td>
              {entry.heading ? (
                <Td colSpan={2} className={cn(cell, "pl-0")}>{entry.k}</Td>
              ) : (
                <>
                  <Td className={cn(cell, "pl-0")}>{entry.k}</Td>
                  <Td className={cell}>{entry.l}</Td>
                </>
              )}
              <Td className={cell}>{entry.payee}</Td>
              <Td className={cell}>{entry.address}</Td>
              <Td className={cell}>{entry.tin}</Td>
              <Blank count={6} className="border-black" />
              <Td className={cn(cell, "pl-0 text-center text-[17px] leading-[18px] not-italic")}>{entry.cls}</Td>
              <Td className={cn(cell, "pl-0 text-center text-[17px] leading-[18px] not-italic")}>{entry.vat}</Td>
              <Td className="border-black" />
              <Blank count={2} />
              {n === 29 ? (
                <Td className="overflow-visible">
                  <span className="absolute -inset-1 border-4 border-[#3a7549]" />
                  <span className="absolute -right-2 -bottom-2 w-[14px] h-[14px] border-2 border-white bg-[#3a7549]" />
                </Td>
              ) : (
                <Td />
              )}
              <Blank count={2} />
            </tr>
          );
        })}
      </tbody>
    </table>

    {/* redaction panels that float over the amounts */}
    <div className="absolute left-[1185px] top-[180px] bottom-0 w-[887px] flex items-center justify-center pt-10 bg-white border border-[#bbb] text-[82px] font-bold text-[#e63626] font-['Lato',sans-serif]">
      CONFIDENTIAL
    </div>
    <div className="absolute left-[2244px] top-[188px] bottom-0 w-[152px] flex items-center justify-center pt-10 bg-white border-l border-[#bbb] text-[82px] leading-[100px] font-bold text-[#e63626] font-['Lato',sans-serif]">
      <span className="[writing-mode:vertical-rl] rotate-180">CONFIDENTIAL</span>
    </div>
  </div>
);

/* --------------------------------- bottom --------------------------------- */

const SHEETS: { name: string; width: string; color: string }[] = [
  { name: "Sales", width: "w-[158px]", color: "bg-[#deedf4] text-black" },
  { name: "Expenses-PCF (Vatable & VE)", width: "w-[411px]", color: "bg-[#bfdde7] text-black" },
  { name: "Expenses-PCF (Non-Vat)", width: "w-[357px]", color: "bg-[#a0cbda] text-black" },
  { name: "Expenses-PCF (New Supplier)", width: "w-[420px]", color: "bg-[#4a8497] text-white" },
  { name: "Expenses-Main", width: "w-[250px]", color: "" },
  { name: "BIR 2307", width: "w-[168px]", color: "bg-[#bfdde7] text-black" },
  { name: "REad Me", width: "w-[168px]", color: "" },
  { name: "Demo Space", width: "w-[214px]", color: "" },
  { name: "SAmple Meralco", width: "w-[256px]", color: "" },
  { name: "Sample computation", width: "w-[280px]", color: "" }
];

const SheetTabs = () => (
  <div className="flex h-[54px] bg-[#2f2f2f] text-[24px]">
    <div className="flex items-center justify-center gap-6 w-[121px] border-t-2 border-[#666]">
      <button aria-label="Previous sheet">
        <Svg w={18} h={22} stroke="none"><path d="M16 1v20L2 11z" fill="#666" /></Svg>
      </button>
      <button aria-label="Next sheet">
        <Svg w={18} h={22} stroke="none"><path d="M2 1v20l14-10z" fill="#b0b0b0" /></Svg>
      </button>
    </div>
    {SHEETS.map(({ name, width, color }) =>
      name === "Expenses-Main" ? (
        <button
          key={name}
          className={cn("shrink-0 h-[45px] px-[6px] pt-[6px] pb-1 rounded-b-md bg-white text-[23px] font-semibold text-[#4a8459]", width)}
        >
          <span className="flex items-center justify-center h-full pt-1 bg-linear-to-b from-[#edf1f3] to-[#9fafb7]">{name}</span>
        </button>
      ) : (
        <button
          key={name}
          className={cn(
            "flex items-start shrink-0 px-[7px] pt-1 border-t-2 border-t-[#666] bg-[#202020] text-[#858585] whitespace-nowrap",
            !color && "px-0 border-l-2 border-l-[#4a4a4a]",
            width
          )}
        >
          <span className={cn("flex items-center justify-center w-full h-10 overflow-hidden", color && "text-[23px] font-medium", color)}>
            {name === "Sample computation" ? (
              <span className="pl-5 bg-linear-to-r from-[#858585] from-70% to-[#333] bg-clip-text text-transparent">{name}</span>
            ) : (
              name
            )}
          </span>
        </button>
      )
    )}
    <button aria-label="Add sheet" className="flex items-center justify-center w-[78px] border-x-2 border-[#4a4a4a] border-t-2 border-t-[#666]">
      <Svg w={20} h={20} stroke="#b5b5b5" sw={3}><path d="M10 0v20M0 10h20" /></Svg>
    </button>
    <div className="flex-1 border-t-2 border-[#666]" />
  </div>
);

const StatusBar = () => (
  <div className="flex items-center h-11 pl-12 pr-12 bg-linear-to-b from-[#494949] to-[#3c3c3c] text-[24px] text-[#ececec]">
    <span>Ready</span>
    <button className="flex items-center gap-2 ml-9">
      <Svg w={32} h={32} stroke="#ececec">
        <circle cx="14" cy="5" r="3.500" />
        <path d="M3 7q-2 2 1 4l6 3v6L7 29q1 2 4 1l4-9M25 7q2 2-1 4l-6 3v3" strokeLinejoin="round" />
        <path d="M19 19l11 12M30 19L19 31" />
      </Svg>
      Accessibility: Investigate
    </button>
    <div className="flex items-center h-full ml-auto">
      <button aria-label="Normal view" className="flex items-center justify-center w-[74px] h-full bg-[#5c5c5c]">
        <Svg w={28} h={26} stroke="#fff" sw={2.4}><path d="M2 2h24v22H2zM2 9h24M2 17h24M10 2v22M18 2v22" /></Svg>
      </button>
      <button aria-label="Page layout view" className="flex justify-center w-[70px]">
        <Svg w={28} h={26} stroke="#fff" sw={2.4}><path d="M2 2h24v22H2zM7 5h14v16H7zM10 9h8M10 13h8M10 17h8" /></Svg>
      </button>
      <button aria-label="Page break view" className="flex justify-center w-[70px]">
        <Svg w={28} h={26} stroke="#fff" sw={2.4}><path d="M2 2h24v22H2zM2 14h15M10 2v12M17 2v12" /></Svg>
      </button>
      <button aria-label="Zoom out" className="ml-5">
        <Svg w={18} h={18} stroke="#fff" sw={4}><path d="M0 9h18" /></Svg>
      </button>
      <input
        type="range"
        aria-label="Zoom"
        min={0}
        max={100}
        defaultValue={39}
        className="appearance-none w-[200px] h-2 mx-3 rounded-full bg-[#7c7c7c] [&::-webkit-slider-thumb]:appearance-none [&::-webkit-slider-thumb]:w-8 [&::-webkit-slider-thumb]:h-8 [&::-webkit-slider-thumb]:rounded-full [&::-webkit-slider-thumb]:bg-[#a5a5a5]"
      />
      <button aria-label="Zoom in">
        <Svg w={18} h={18} stroke="#fff" sw={4}><path d="M9 0v18M0 9h18" /></Svg>
      </button>
      <span className="ml-8">80%</span>
    </div>
  </div>
);

const App = () => (
  <div className="flex flex-col h-screen overflow-hidden bg-[#272727] font-['Inter',sans-serif]">
    <div className="shrink-0 h-[72px] bg-black" />
    <header className="shrink-0">
      <TitleBar />
      <TabRow />
      <Ribbon />
      <FormulaBar />
      <div className="h-[6px] bg-[#e8e8e8] border-y-2 border-[#9a9a9a]" />
    </header>
    <Sheet />
    <footer className="shrink-0">
      <SheetTabs />
      <StatusBar />
    </footer>
  </div>
);

export default App;
